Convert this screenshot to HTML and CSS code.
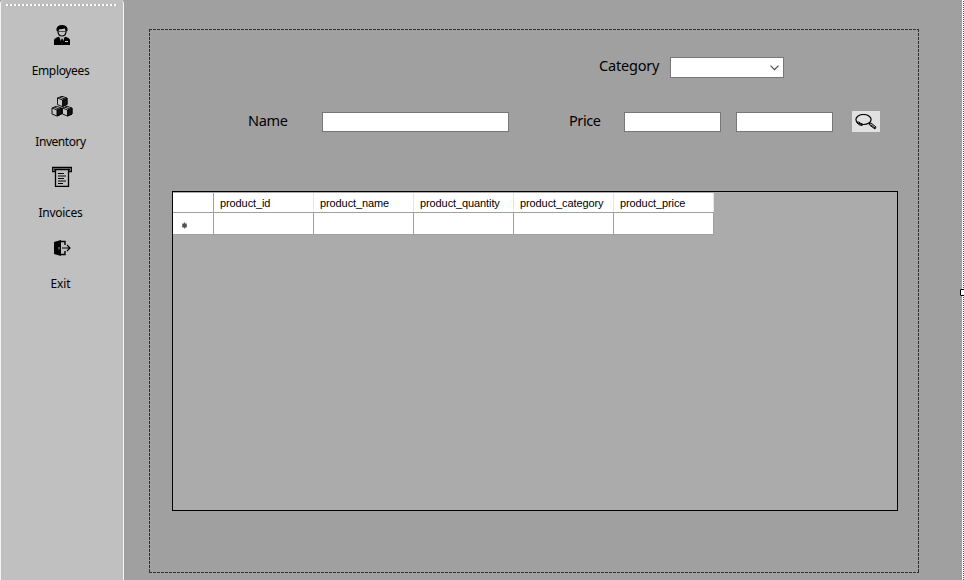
FILE: index.html
```html
<!DOCTYPE html>
<html lang="en">
<head>
<meta charset="utf-8">
<title>Inventory</title>
<link rel="stylesheet" href="styles.css">
</head>
<body>
<div class="window">
  <nav class="sidebar">
    <div class="grip"></div>
    <a class="item">
      <svg width="16" height="22" viewBox="0 0 16 22"><path d="M4 8V5Q4 2 8 2t4 3v3q-.5 4-4 4T4 8Z" fill="#c0c0c0" stroke="#000" stroke-width="1.200"/><path d="M2.500 7V4.500Q3.500 1 8 1t5.500 3.500V7L12 7 11 4.500 5 5.500 4 7Z"/><path d="M4 7.500h8" stroke="#333" stroke-width=".8"/><path d="M0 21v-5q.5-2 4.500-3.200L8 15l3.500-2.200Q15.500 14 16 16v5Z"/><path d="M5.500 13.500L8 20l2.500-6.500L8 15Z" fill="#ccc"/><path d="M7.300 15h1.400l.5 3L8 20.500 6.800 18Z"/><path d="M11 17.500h3" stroke="#ccc"/></svg>
      <span class="w-emp">Employees</span>
    </a>
    <a class="item">
      <svg width="22" height="22" viewBox="0 0 22 22" stroke="#000" stroke-width=".9" stroke-linejoin="round"><path d="M6.500 3l4.500-1.700L16 3v6.500L11 11.500 6.500 9.500Z" fill="#c4c4c4"/><path d="M11.500 5L16 3v6.500l-4.500 2Z" fill="#111"/><path d="M6.500 3l5 2M9 2.200l5 2" fill="none"/><path d="M1 13l4.500-1.700L10.500 13v6L6 21l-5-2Z" fill="#c4c4c4"/><path d="M6 15l4.500-2v6L6 21Z" fill="#111"/><path d="M1 13l5 2M3.500 12.200l5 2" fill="none"/><path d="M11.500 13l4.500-1.700L21 13v6l-4.500 2-5-2Z" fill="#c4c4c4"/><path d="M16.500 15l4.500-2v6l-4.500 2Z" fill="#111"/><path d="M11.500 13l5 2M14 12.200l5 2" fill="none"/></svg>
      <span class="w-invt">Inventory</span>
    </a>
    <a class="item">
      <svg width="22" height="22" viewBox="0 0 22 22" fill="none" stroke="#000" stroke-width="1.300"><path d="M4 5.500H1.700v-4h18.600v4H18M3 3.500h16"/><path d="M4.500 4v16.300h13V4"/><path d="M7 7.500h6M7 10h8M7 12.500h6M7 15h8M7 17.500h5" stroke-width="1.200"/></svg>
      <span class="w-invc">Invoices</span>
    </a>
    <a class="item">
      <svg width="20" height="22" viewBox="0 0 20 22"><path d="M2 5l7-2v16l-7-2Z"/><path d="M9 4.500h4V8M9 17.500h4V14" fill="none" stroke="#000" stroke-width="1.400"/><path d="M10 11H18m-3-3l3 3-3 3" fill="none" stroke="#000" stroke-width="1.100"/><path d="M7 10v2.500" stroke="#aaa"/></svg>
      <span class="w-exit">Exit</span>
    </a>
  </nav>
  <main class="content">
    <section class="panel">
      <div class="row category">
        <label class="w-cat">Category</label>
        <div class="field select"><svg width="9" height="6" viewBox="0 0 9 6" fill="none" stroke="#444" stroke-width="1.100"><path d="M.5.7l4 4 4-4"/></svg></div>
      </div>
      <div class="row filters">
        <label class="w-name">Name</label>
        <div class="field name"></div>
        <label class="w-price">Price</label>
        <div class="field price"></div>
        <div class="field price to"></div>
        <div class="search"><svg width="22" height="17" viewBox="0 0 22 17" fill="none" stroke="#000"><ellipse cx="8.500" cy="5.500" rx="7.600" ry="5" stroke-width="1.200"/><path d="M1.500 7q1 4.500 6 4.500M3.500 7.500q1.500 2 4 2.500"/><path d="M14 9.500l2-.5 5 4-1 2-5.500-4Z"/><path d="M15.500 10.500l4.500 3.500"/></svg></div>
      </div>
      <div class="datagrid">
        <div class="line head"><b></b><span>product_id</span><span>product_name</span><span>product_quantity</span><span>product_category</span><span>product_price</span></div>
        <div class="line body"><b><svg width="7" height="7" viewBox="0 0 7 7" stroke="#555"><circle cx="3.500" cy="3.500" r="2.200" fill="#444" stroke="none"/><path d="M3.500.5v6M1 1.800l5 3.400M1 5.200l5-3.400"/></svg></b><span></span><span></span><span></span><span></span><span></span></div>
      </div>
    </section>
  </main>
  <div class="edge"><i class="handle"></i></div>
</div>
</body>
</html>
```
FILE: styles.css
```css
* { box-sizing: border-box; }
body { margin: 0; overflow: hidden; font-family: "Noto Sans", "Open Sans", sans-serif; color: #000; }
svg { display: block; }
.window { display: flex; width: 964px; height: 580px; background: #a0a0a0; }
.sidebar {
  width: 124px; background: #c0c0c0; border: solid #f4f4f4; border-width: 0 1px 0 1px;
  border-radius: 4px 4px 0 0; display: flex; flex-direction: column;
}
.grip {
  height: 3px; margin: 4px 6px 17px 5px;
  background: repeating-linear-gradient(90deg, #fff 0 2px, #b4b4b4 2px 4px) 0 0 / 100% 2px no-repeat;
}
.item { height: 71px; display: flex; flex-direction: column; align-items: center; font-size: 12px; padding-right: 3px; }
.item span { margin-top: 16px; line-height: 18px; white-space: nowrap; }
.item svg { margin-left: 2px; }
.w-emp { letter-spacing: -.35px; }
.w-invt { letter-spacing: -.45px; }
.w-invc { letter-spacing: -.3px; }
.w-exit { letter-spacing: -.1px; }
.content { flex: 1; padding: 29px 0 0 25px; }
.panel {
  width: 770px; height: 544px; padding: 28px 21px 0 23px;
  background:
    repeating-linear-gradient(90deg, #303030 0 3px, #a0a0a0 3px 4px) 0 0 / 100% 1px no-repeat,
    repeating-linear-gradient(90deg, #303030 0 3px, #a0a0a0 3px 4px) 0 100% / 100% 1px no-repeat,
    repeating-linear-gradient(#303030 0 3px, #a0a0a0 3px 4px) 0 0 / 1px 100% no-repeat,
    repeating-linear-gradient(#303030 0 3px, #a0a0a0 3px 4px) 100% 0 / 1px 100% no-repeat;
}
.row { display: flex; height: 21px; }
.row label { font-size: 14.5px; line-height: 20px; margin-top: -2px; white-space: nowrap; flex: none; }
.category { padding-left: 427px; margin-bottom: 34px; }
.w-cat { width: 71px; letter-spacing: -.2px; }
.field { height: 20px; background: #fff; border: 1px solid #777; flex: none; }
.select { width: 114px; height: 21px; display: flex; align-items: center; justify-content: flex-end; padding-right: 4px; }
.filters { padding-left: 76px; margin-bottom: 58px; }
.w-name { width: 74px; letter-spacing: -.3px; }
.name { width: 187px; margin-right: 60px; }
.w-price { width: 55px; letter-spacing: -.4px; }
.price { width: 97px; }
.to { margin-left: 15px; }
.search { width: 28px; height: 21px; margin: -1px 0 0 19px; background: #e1e1e1; padding: 3px; border: 0; flex: none; }
.datagrid { width: 726px; height: 320px; border: 1px solid #000; background: #ababab; padding-top: 1px; font: 11px/20px "Liberation Sans", sans-serif; letter-spacing: -.1px; }
.line { display: flex; width: 541px; background: #fff; border-bottom: 1px solid #a0a0a0; }
.line b { width: 41px; padding: 9px 0 0 8px; border-right: 1px solid #a0a0a0; }
.line span { width: 100px; padding-left: 6px; border-right: 1px solid #a0a0a0; }
.head { height: 20px; }
.head span { border-right-color: #e5e5e5; }
.body { height: 22px; }
.edge { position: relative; width: 2px; background: repeating-linear-gradient(#fff 0 1px, #555 1px 2px) 1px 0 / 1px 100% no-repeat #f4f4f4; }
.handle { position: absolute; left: -2px; top: 289px; width: 7px; height: 7px; border: 1px solid #000; border-radius: 1px; background: #fff; }
```
